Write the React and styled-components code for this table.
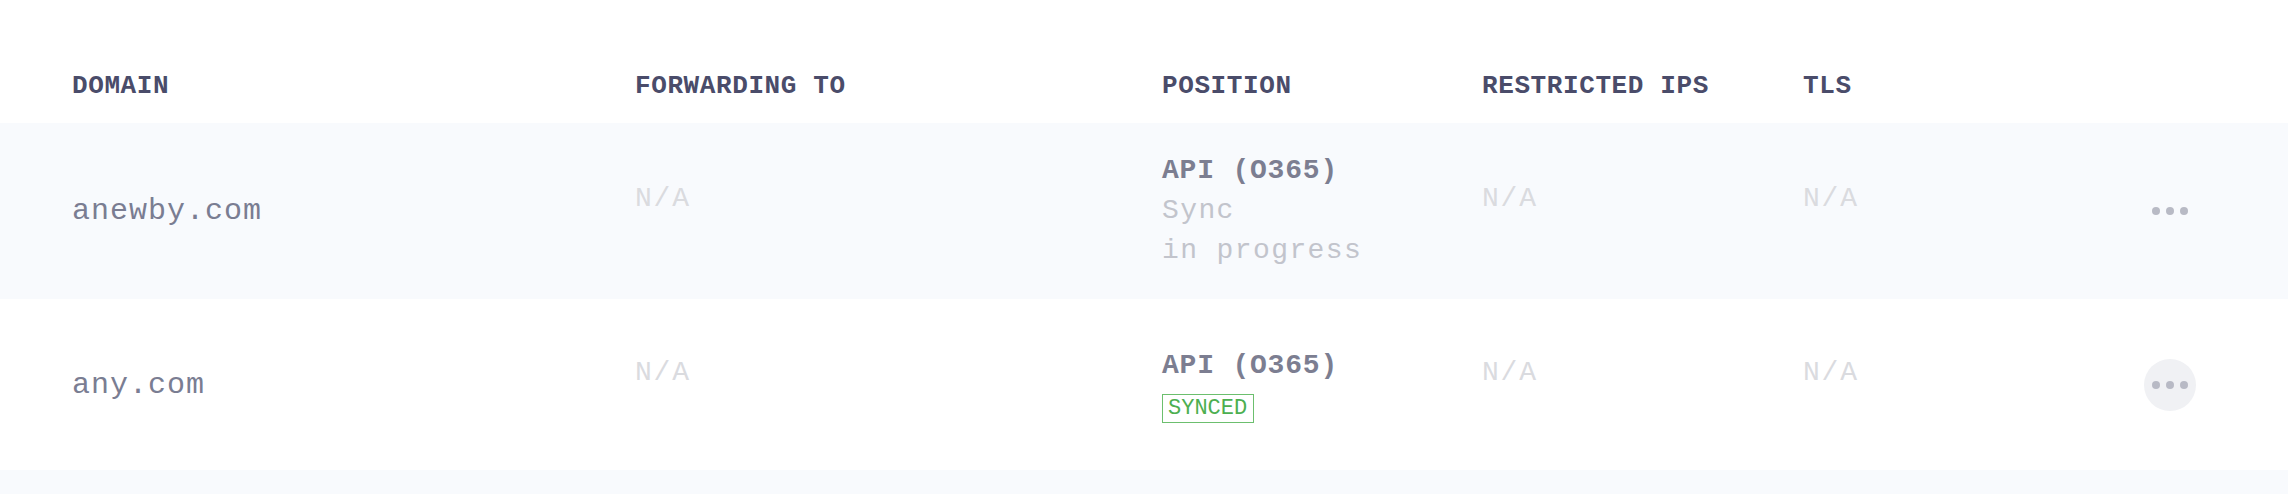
import styled, { createGlobalStyle, css } from 'styled-components'

const GlobalStyle = createGlobalStyle`
    body {
        margin: 0;
        background: #ffffff;
        font-family: "Liberation Mono", "DejaVu Sans Mono", monospace;
    }
`

const columns = css`
    display: grid;
    grid-template-columns: 563px 527px 320px 321px 1fr 100px;
    padding: 0 68px 0 72px;
    align-items: center;
`

const Table = styled.div`
    width: 100%;
`

const HeaderRow = styled.div`
    ${columns}
    padding-top: 70px;
    padding-bottom: 21px;
`

const HeaderCell = styled.div`
    font-size: 26px;
    line-height: 32px;
    font-weight: 700;
    letter-spacing: 0.6px;
    color: #4a4c6a;
    text-transform: uppercase;
`

const Row = styled.div`
    ${columns}
    min-height: ${props => props.$height}px;
    background: ${props => props.$shaded ? '#f8fafd' : '#ffffff'};
    box-sizing: border-box;
`

const Domain = styled.div`
    font-size: 30px;
    line-height: 40px;
    letter-spacing: 1px;
    color: #7a7d92;
`

const Empty = styled.div`
    font-size: 28px;
    line-height: 40px;
    letter-spacing: 1.8px;
    color: #dadbdf;
    padding-bottom: 24px;
`

const Position = styled.div`
    display: flex;
    flex-direction: column;
    align-items: flex-start;
`

const PositionTitle = styled.div`
    font-size: 28px;
    line-height: 40px;
    font-weight: 700;
    letter-spacing: 0.8px;
    color: #7c7e91;
`

const PositionStatus = styled.div`
    font-size: 28px;
    line-height: 40px;
    letter-spacing: 1.4px;
    color: #c2c4cc;
    white-space: pre-line;
`

const Badge = styled.span`
    margin-top: 8px;
    padding: 0 6px 0 5px;
    border: 1px solid #6cbf6e;
    font-size: 22px;
    line-height: 27px;
    color: #4caf50;
    text-transform: uppercase;
`

const Actions = styled.div`
    display: flex;
    justify-content: center;
`

const MoreButton = styled.button`
    width: 52px;
    height: 52px;
    border: none;
    border-radius: 50%;
    padding: 0;
    background: ${props => props.$active ? '#f0f1f4' : 'transparent'};
    display: flex;
    align-items: center;
    justify-content: center;
    gap: 6px;
    cursor: pointer;
`

const Dot = styled.span`
    width: 8px;
    height: 8px;
    border-radius: 50%;
    background: #b8bac5;
`

const domains = [
    { name: 'anewby.com', status: 'Sync\nin progress', height: 176, shaded: true },
    { name: 'any.com', synced: true, height: 171, active: true },
]

function PositionCell ({domain}) {
    return (
        <Position>
            <PositionTitle>API (O365)</PositionTitle>
            {
                domain.synced
                ? <Badge>Synced</Badge>
                : <PositionStatus>{domain.status}</PositionStatus>
            }
        </Position>
    )
}

export default function App () {
    return (
        <Table>
            <GlobalStyle />
            <HeaderRow>
                <HeaderCell>Domain</HeaderCell>
                <HeaderCell>Forwarding to</HeaderCell>
                <HeaderCell>Position</HeaderCell>
                <HeaderCell>Restricted IPs</HeaderCell>
                <HeaderCell>TLS</HeaderCell>
                <div />
            </HeaderRow>
            {
                domains.map(domain => {
                    return (
                        <Row key={domain.name} $height={domain.height} $shaded={domain.shaded}>
                            <Domain>{domain.name}</Domain>
                            <Empty>N/A</Empty>
                            <PositionCell domain={domain} />
                            <Empty>N/A</Empty>
                            <Empty>N/A</Empty>
                            <Actions>
                                <MoreButton $active={domain.active}>
                                    <Dot /><Dot /><Dot />
                                </MoreButton>
                            </Actions>
                        </Row>
                    )
                })
            }
            {/* next row starts just above the fold */}
            <Row $height={24} $shaded />
        </Table>
    )
}
